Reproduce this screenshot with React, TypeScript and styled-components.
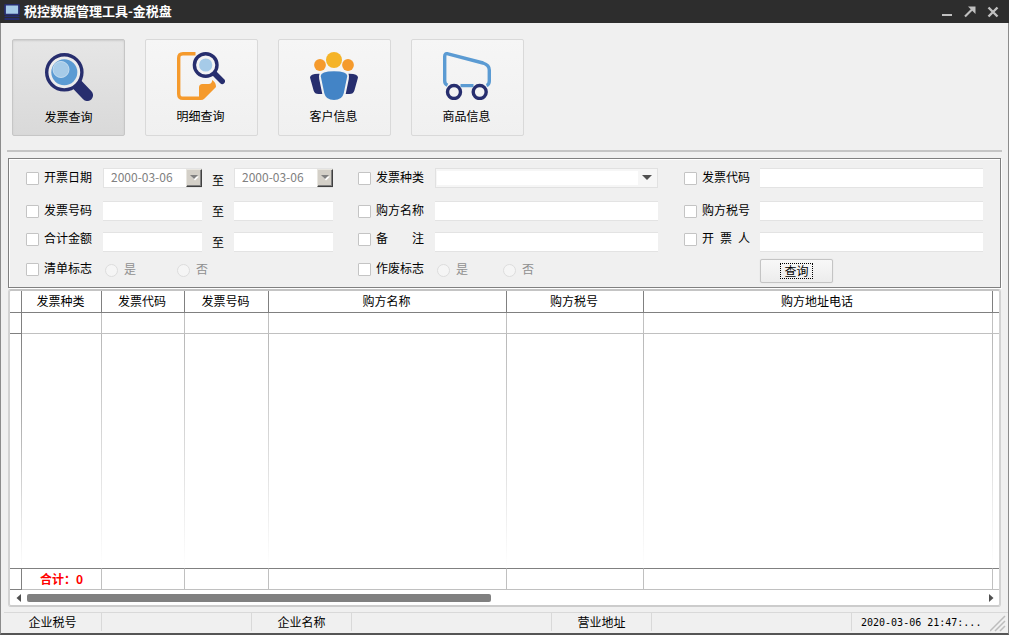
import React from 'react';
import styled, { createGlobalStyle, css } from 'styled-components';

const GlobalStyle = createGlobalStyle`
  *, *::before, *::after { box-sizing: border-box; }
  body { margin: 0; background: #f0f0f0; }
  body, button, input, select, table {
    font-family: "Noto Sans CJK SC", "Liberation Sans", sans-serif;
    font-size: 12px;
    line-height: 20px;
    color: #000;
  }
`;

const NAVY = '#272e6e';
const BLUE = '#5b9bd3';
const PALE = '#a6cbe8';
const ORANGE = '#f59a2c';

const Window = styled.div`
  display: flex;
  flex-direction: column;
  min-height: 100vh;
  border: solid #8c8c8c;
  border-width: 0 1px 2px;
  border-bottom-color: #555;
  background: #f0f0f0;
`;

const TitleBar = styled.header`
  display: flex;
  align-items: center;
  height: 23px;
  margin: 0 -1px;
  padding: 0 10px 0 4px;
  gap: 4px;
  background: #2d2d2d;
`;

const Title = styled.h1`
  flex: 1;
  margin: 0;
  padding-bottom: 2px;
  font-size: 13px;
  font-weight: 700;
  color: #fff;
`;

const WindowButtons = styled.div`
  display: flex;
  gap: 11px;
`;

const WindowButton = styled.button`
  display: flex;
  width: 12px;
  height: 12px;
  padding: 0;
  border: 0;
  background: none;
`;

const Toolbar = styled.nav`
  display: flex;
  flex-wrap: wrap;
  gap: 20px;
  margin: 0 6px;
  padding: 16px 5px 14px;
  border-bottom: 2px solid #c4c4c4;
`;

const ToolButton = styled.button<{ $pressed?: boolean }>`
  display: flex;
  flex-direction: column;
  align-items: center;
  gap: 6px;
  width: 113px;
  height: 97px;
  padding: 12px 2px 0 0;
  border: 1px solid #d9d9d9;
  border-radius: 2px;
  background: linear-gradient(#f6f6f6, #f0f0f0);
  ${p => p.$pressed && css`
    padding: 13px 0 0;
    border-color: #c6c6c6;
    background: linear-gradient(#e6e6e6, #d9d9d9);
    box-shadow: inset 0 1px 2px #ccc;
  `}
`;

const FilterForm = styled.form`
  margin: 6px 7px 0;
  padding: 9px 17px 4px;
  border: 1px solid #808080;
  box-shadow: inset 1px 1px 0 #fff, 1px 1px 0 #fff;
`;

const FilterRow = styled.div<{ $height: number; $after?: number; $align?: string }>`
  display: grid;
  grid-template-columns:
    77px minmax(60px, 99fr) 32px minmax(60px, 99fr) 25px
    77px minmax(90px, 223fr) 26px
    76px minmax(90px, 223fr);
  align-items: ${p => p.$align || 'start'};
  min-height: ${p => p.$height}px;
  margin-bottom: ${p => p.$after || 0}px;
`;

const CheckLabel = styled.label<{ $col: number }>`
  grid-column: ${p => p.$col};
  align-self: start;
  display: flex;
  align-items: center;
  gap: 5px;
  height: 20px;
  white-space: pre;
`;

const CheckBox = styled.input`
  appearance: none;
  flex: none;
  width: 13px;
  height: 13px;
  margin: 1px 0 0;
  border: 1px solid #c4c4c4;
  border-radius: 1px;
  background: #fff;
`;

const CheckText = styled.span`
  display: flex;
  justify-content: space-between;
  width: 48px;
  padding-bottom: 2px;
`;

const TextField = styled.input<{ $col: number }>`
  grid-column: ${p => p.$col};
  width: 100%;
  height: 20px;
  padding: 0 4px;
  border: solid #e3e3e3;
  border-width: 1px 0;
  background: #fff;
`;

const Between = styled.span`
  grid-column: 3;
  align-self: end;
  padding-bottom: 1px;
  line-height: 19px;
  text-align: center;
`;

const DateField = styled.div<{ $col: number }>`
  grid-column: ${p => p.$col};
  display: flex;
  height: 20px;
  border: 1px solid #e3e3e3;
  border-right: 0;
  background: #fff;
`;

const DateText = styled.input`
  flex: 1;
  min-width: 0;
  padding: 0 0 2px 7px;
  border: 0;
  background: none;
  color: #808080;
`;

const DropButton = styled.button`
  display: flex;
  align-items: center;
  justify-content: center;
  width: 16px;
  padding: 0;
  border: 1px solid #e8e6e0;
  border-right-color: #404040;
  border-bottom-color: #404040;
  background: #d4d0c8;
  box-shadow: inset -1px -1px 0 #808080;
`;

const SelectBox = styled.div`
  grid-column: 7;
  display: grid;
  grid-template-columns: 1fr 20px;
  align-items: center;
  height: 20px;
`;

const Select = styled.select`
  grid-area: 1 / 1 / 2 / 3;
  appearance: none;
  width: 100%;
  height: 20px;
  padding: 0 22px 0 4px;
  border: 1px solid #e1e1e1;
  background: linear-gradient(#fff, #fff) 1px 2px / calc(100% - 20px) 14px no-repeat #f6f6f6;
`;

const SelectArrow = styled.svg`
  grid-area: 1 / 2;
  margin: 0 0 2px 4px;
  pointer-events: none;
`;

const RadioGroup = styled.div<{ $from: number; $to: number; $step: number }>`
  grid-column: ${p => p.$from} / ${p => p.$to};
  display: grid;
  grid-template-columns: repeat(2, ${p => p.$step}px);
  padding-left: 2px;
`;

const RadioLabel = styled.label`
  display: flex;
  align-items: center;
  gap: 6px;
  height: 20px;
  color: #8f8f8f;
`;

const Radio = styled.input`
  appearance: none;
  width: 13px;
  height: 13px;
  margin: 2px 0 0;
  border: 1px solid #ddd;
  border-radius: 50%;
  background: #f5f5f5;
`;

const QueryButton = styled.button`
  grid-column: 10;
  display: flex;
  align-items: center;
  justify-content: center;
  width: 73px;
  height: 24px;
  padding: 0 0 1px;
  border: 1px solid #c4c4c4;
  border-radius: 2px;
  background: linear-gradient(#f8f8f8, #ececec);
  box-shadow: 0 0 1px #ccc;
`;

const FocusText = styled.span`
  padding: 0 3px;
  border: 1px dotted #000;
  line-height: 14px;
`;

const GridPanel = styled.section`
  flex: 1;
  display: flex;
  flex-direction: column;
  margin: 1px 7px 0;
  border: 2px solid #c4c4c4;
  border-left-color: #d2d2d2;
  border-right-color: #d2d2d2;
  border-bottom-color: #ccc;
  border-radius: 3px;
  background: #fff;
`;

const DataTable = styled.table`
  flex: 1;
  width: 100%;
  table-layout: fixed;
  border-collapse: separate;
  border-spacing: 0;
`;

const HeadCell = styled.th`
  height: 22px;
  padding: 0 2px 2px 0;
  border: solid #808080;
  border-width: 0 1px 1px 0;
  font-weight: 400;
  line-height: 19px;
  &:last-child { border-right: 0; }
`;

const Cell = styled.td`
  height: 21px;
  padding: 0;
  border: solid #c0c0c0;
  border-width: 0 1px 1px 0;
  line-height: 20px;
  &:first-child { border-color: #808080; }
  &:last-child { border-right: 0; }
`;

const EmptyCell = styled.td`
  padding: 0;
  background: linear-gradient(#b8b8b8, #fff) right / 1px 100% no-repeat;
  &:first-child { background-image: linear-gradient(#808080, #fff); }
  &:last-child { background: none; }
`;

const TotalCell = styled(Cell)`
  height: 22px;
  border-top: 1px solid #808080;
  font-weight: 700;
  text-align: center;
  color: #f00;
`;

const ScrollBar = styled.div`
  display: grid;
  grid-template-columns: 8px 1fr 8px;
  align-items: center;
  gap: 4px;
  height: 15px;
  padding: 0 4px 0 5px;
`;

const ScrollThumb = styled.div`
  width: 48.5%;
  height: 8px;
  border-radius: 2px;
  background: #808080;
`;

const StatusBar = styled.footer`
  display: grid;
  grid-template-columns: 98px 150px 100px 200px 100px 1fr 156px;
  height: 21px;
  margin: 5px 0 0 3px;
  border-top: 1px solid #d9d9d9;
`;

const StatusCell = styled.div`
  height: 18px;
  border-right: 1px solid #d9d9d9;
  line-height: 18px;
  text-align: center;
`;

const StatusTime = styled.div`
  display: flex;
  justify-content: space-between;
  padding-left: 9px;
  font-family: "DejaVu Sans Mono", monospace;
  font-size: 10px;
  line-height: 19px;
  white-space: nowrap;
`;

const AppIcon = () => (
  <svg width="16" height="16" viewBox="0 0 16 16" aria-hidden="true">
    <rect x="1" y="0.600" width="14" height="10" rx="1" fill={PALE} stroke={NAVY} strokeWidth="1.800" />
    <path d="M0.500 12.500H15.500" stroke={NAVY} strokeWidth="1.200" />
    <path d="M0.500 15H15.500" stroke={NAVY} strokeWidth="2" />
  </svg>
);

const SearchIcon = () => (
  <svg width="48" height="48" viewBox="0 0 48 48" aria-hidden="true">
    <path d="M32 31.500L42.300 42.300" stroke={NAVY} strokeWidth="11.500" strokeLinecap="round" />
    <circle cx="19.300" cy="19.300" r="17.600" fill="#ececec" stroke={NAVY} strokeWidth="3.400" />
    <circle cx="19.300" cy="19.300" r="13" fill={BLUE} />
    <circle cx="16" cy="16.500" r="8" fill={PALE} stroke="#c3dcf0" strokeWidth="1" />
  </svg>
);

const DetailIcon = () => (
  <svg width="48" height="48" viewBox="0 0 48 48" aria-hidden="true">
    <path d="M18.500 1.700H6Q1.700 1.700 1.700 6V42Q1.700 46.300 6 46.300H24" fill="none" stroke={ORANGE} strokeWidth="3.400" />
    <path d="M22 48V35.500Q22 32 25.500 32H31.500Q35 32 35.200 28Q39.200 30.500 39 35L27.500 46.500Q26 48 24 48Z" fill={ORANGE} />
    <path d="M37 21L45.200 29.200" stroke={NAVY} strokeWidth="5.600" strokeLinecap="round" />
    <circle cx="28.700" cy="13" r="11.300" fill="#f4f4f4" stroke={NAVY} strokeWidth="3.400" />
    <circle cx="28.700" cy="13" r="6.600" fill={PALE} />
  </svg>
);

const CustomerIcon = () => (
  <svg width="48" height="48" viewBox="0 0 48 48" aria-hidden="true">
    <circle cx="24" cy="8" r="8" fill="#f5b428" />
    <circle cx="10" cy="13" r="5.900" fill={ORANGE} />
    <circle cx="38" cy="13" r="5.900" fill={ORANGE} />
    <path d="M0 25.500Q0 21.500 9.500 21.700Q8.700 23.500 9.200 27L12.300 42H8.500Q4.600 42 3.600 38.500Z" fill={NAVY} />
    <path d="M48 25.500Q48 21.500 38.500 21.700Q39.300 23.500 38.800 27L35.700 42H39.500Q43.400 42 44.400 38.500Z" fill={NAVY} />
    <path d="M10.700 24Q10.700 19.200 24 19.200Q37.300 19.200 37.300 24L33.800 41Q32.300 48 24 48Q15.700 48 14.200 41Z" fill="#4384c6" />
  </svg>
);

const GoodsIcon = () => (
  <svg width="48" height="48" viewBox="0 0 48 48" aria-hidden="true">
    <g fill="none" strokeWidth="3.400">
      <path d="M4.500 33.300Q1.700 32 1.700 29V4.500Q1.700 1 5 1.800L40 11Q46.300 13 46.300 18V29Q46.300 32.500 43.500 33.500M17.500 33.600H30.500" stroke={BLUE} />
      <circle cx="11" cy="40" r="6.500" stroke={NAVY} />
      <circle cx="36.700" cy="40" r="6.500" stroke={NAVY} />
    </g>
  </svg>
);

const tools = [
  { name: '发票查询', icon: <SearchIcon />, pressed: true },
  { name: '明细查询', icon: <DetailIcon /> },
  { name: '客户信息', icon: <CustomerIcon /> },
  { name: '商品信息', icon: <GoodsIcon /> },
];

const columns = [
  { name: '发票种类', width: 80 },
  { name: '发票代码', width: 83 },
  { name: '发票号码', width: 84 },
  { name: '购方名称', width: 238 },
  { name: '购方税号', width: 137 },
  { name: '购方地址电话', width: 349 },
];

const Check = ({ col, parts }: { col: number; parts: string[] }) => (
  <CheckLabel $col={col}>
    <CheckBox type="checkbox" />
    <CheckText>{parts.map(t => <span key={t}>{t}</span>)}</CheckText>
  </CheckLabel>
);

const DatePicker = ({ col, label }: { col: number; label: string }) => (
  <DateField $col={col}>
    <DateText aria-label={label} defaultValue="2000-03-06" disabled />
    <DropButton type="button" disabled aria-label="选择日期">
      <svg width="9" height="6" viewBox="0 0 9 6">
        <path d="M1.500 1.500H9L5 5.500Z" fill="#fff" />
        <path d="M0 0H8L4 4Z" fill="#808080" />
      </svg>
    </DropButton>
  </DateField>
);

const YesNo = ({ name, from, to, step }: { name: string; from: number; to: number; step: number }) => (
  <RadioGroup $from={from} $to={to} $step={step}>
    {['是', '否'].map(t => (
      <RadioLabel key={t}><Radio type="radio" name={name} disabled />{t}</RadioLabel>
    ))}
  </RadioGroup>
);

export default function App() {
  return (
    <Window>
      <GlobalStyle />
      <TitleBar>
        <AppIcon />
        <Title>税控数据管理工具-金税盘</Title>
        <WindowButtons>
          <WindowButton aria-label="最小化">
            <svg width="12" height="12" viewBox="0 0 12 12"><path d="M1 9H11" stroke="#c0c0c0" strokeWidth="2" /></svg>
          </WindowButton>
          <WindowButton aria-label="最大化">
            <svg width="12" height="12" viewBox="0 0 12 12">
              <path d="M1 10.500L8 3.500" stroke="#c0c0c0" strokeWidth="2.200" />
              <path d="M4 0.500H11.500V8Z" fill="#c0c0c0" />
            </svg>
          </WindowButton>
          <WindowButton aria-label="关闭">
            <svg width="12" height="12" viewBox="0 0 12 12"><path d="M1.500 1.500L10.500 10.500M10.500 1.500L1.500 10.500" stroke="#c0c0c0" strokeWidth="2.400" /></svg>
          </WindowButton>
        </WindowButtons>
      </TitleBar>

      <Toolbar>
        {tools.map(t => (
          <ToolButton key={t.name} type="button" $pressed={t.pressed}>
            {t.icon}
            <span>{t.name}</span>
          </ToolButton>
        ))}
      </Toolbar>

      <FilterForm onSubmit={e => e.preventDefault()}>
        <FilterRow $height={22} $after={11}>
          <Check col={1} parts={['开票日期']} />
          <DatePicker col={2} label="开票日期起" />
          <Between>至</Between>
          <DatePicker col={4} label="开票日期止" />
          <Check col={6} parts={['发票种类']} />
          <SelectBox>
            <Select aria-label="发票种类"><option value="" /></Select>
            <SelectArrow width="10" height="5" viewBox="0 0 10 5"><path d="M0 0H10L5 5Z" fill="#505050" /></SelectArrow>
          </SelectBox>
          <Check col={9} parts={['发票代码']} />
          <TextField $col={10} aria-label="发票代码" />
        </FilterRow>
        <FilterRow $height={20} $after={8}>
          <Check col={1} parts={['发票号码']} />
          <TextField $col={2} aria-label="发票号码起" />
          <Between>至</Between>
          <TextField $col={4} aria-label="发票号码止" />
          <Check col={6} parts={['购方名称']} />
          <TextField $col={7} aria-label="购方名称" />
          <Check col={9} parts={['购方税号']} />
          <TextField $col={10} aria-label="购方税号" />
        </FilterRow>
        <FilterRow $height={23} $after={7} $align="end">
          <Check col={1} parts={['合计金额']} />
          <TextField $col={2} aria-label="合计金额起" />
          <Between>至</Between>
          <TextField $col={4} aria-label="合计金额止" />
          <Check col={6} parts={['备', '注']} />
          <TextField $col={7} aria-label="备注" />
          <Check col={9} parts={['开', '票', '人']} />
          <TextField $col={10} aria-label="开票人" />
        </FilterRow>
        <FilterRow $height={24}>
          <Check col={1} parts={['清单标志']} />
          <YesNo name="list" from={2} to={5} step={72} />
          <Check col={6} parts={['作废标志']} />
          <YesNo name="void" from={7} to={8} step={66} />
          <QueryButton type="submit"><FocusText>查询</FocusText></QueryButton>
        </FilterRow>
      </FilterForm>

      <GridPanel>
        <DataTable>
          <colgroup>
            <col width={12} />
            {columns.map(c => <col key={c.name} width={c.width} />)}
            <col />
          </colgroup>
          <thead>
            <tr>
              <HeadCell />
              {columns.map(c => <HeadCell key={c.name} scope="col">{c.name}</HeadCell>)}
              <HeadCell />
            </tr>
          </thead>
          <tbody>
            <tr><Cell />{columns.map(c => <Cell key={c.name} />)}<Cell /></tr>
            <tr><EmptyCell />{columns.map(c => <EmptyCell key={c.name} />)}<EmptyCell /></tr>
          </tbody>
          <tfoot>
            <tr>
              <TotalCell />
              {columns.map((c, i) => <TotalCell key={c.name}>{i === 0 ? '合计：0' : null}</TotalCell>)}
              <TotalCell />
            </tr>
          </tfoot>
        </DataTable>
        <ScrollBar>
          <svg width="8" height="8" viewBox="0 0 8 8"><path d="M6 0V8L1.500 4Z" fill="#505050" /></svg>
          <ScrollThumb />
          <svg width="8" height="8" viewBox="0 0 8 8"><path d="M2 0V8L6.500 4Z" fill="#505050" /></svg>
        </ScrollBar>
      </GridPanel>

      <StatusBar>
        <StatusCell>企业税号</StatusCell>
        <StatusCell />
        <StatusCell>企业名称</StatusCell>
        <StatusCell />
        <StatusCell>营业地址</StatusCell>
        <StatusCell />
        <StatusTime>
          <span>2020-03-06 21:47:...</span>
          <svg width="18" height="20" viewBox="0 0 18 20" aria-hidden="true">
            <path d="M0 18L15 3M5 18L15 8M10 18L15 13" stroke="#bdbdbd" strokeWidth="1.500" />
          </svg>
        </StatusTime>
      </StatusBar>
    </Window>
  );
}
